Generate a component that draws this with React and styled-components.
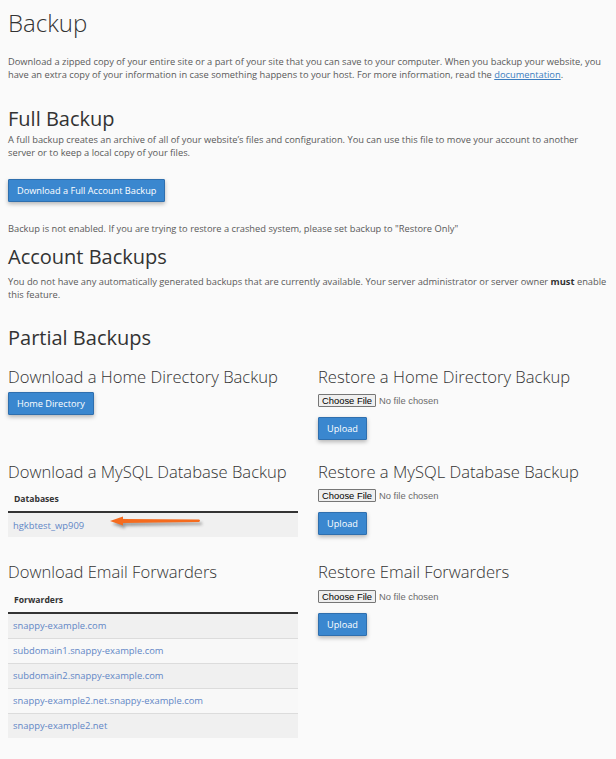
import React from "react";
import styled, { createGlobalStyle } from "styled-components";

const GlobalStyle = createGlobalStyle`
  html, body {
    margin: 0;
    padding: 0;
    background: #fafafa;
  }
  body {
    font-family: "Open Sans", "Liberation Sans", sans-serif;
    color: #595959;
  }
`;

const Page = styled.div`
  padding: 0 8px 20px;
`;

const PageTitle = styled.h1`
  margin: 10px 0 0;
  font-size: 24px;
  font-weight: 300;
  line-height: 1.1;
  color: #333;
`;

const Text = styled.p`
  margin: ${(p) => p.$mt || 0}px 0 0;
  max-width: ${(p) => p.$maxWidth || "none"};
  font-size: 9.3px;
  line-height: 12.8px;
  color: #595959;

  b {
    color: #333;
  }
`;

const DocLink = styled.a`
  color: #3b7dc0;
  text-decoration: underline;
`;

const SectionTitle = styled.h2`
  margin: ${(p) => p.$mt || 0}px 0 0;
  font-size: 20px;
  font-weight: 400;
  line-height: 1.1;
  color: #333;
`;

const Button = styled.button`
  display: block;
  margin-top: ${(p) => p.$mt || 0}px;
  height: 23px;
  padding: 0 8px;
  border: 1px solid #2f6fae;
  border-radius: 1px;
  background: #3a87cf;
  color: #fff;
  font-family: "Open Sans", "Liberation Sans", sans-serif;
  font-size: 9.2px;
  box-shadow: 0 2px 4px rgba(0, 0, 0, 0.28);
  cursor: pointer;
`;

const Columns = styled.div`
  display: grid;
  grid-template-columns: 290px 290px;
  column-gap: 20px;
  margin-top: ${(p) => p.$mt || 0}px;
`;

const Cell = styled.div`
  display: flex;
  flex-direction: column;
  align-items: flex-start;
`;

const ColTitle = styled.h3`
  margin: 0;
  font-size: 16.6px;
  font-weight: 300;
  line-height: 1.1;
  color: #333;
  white-space: nowrap;
`;

const FileInput = styled.input`
  margin-top: 8px;
  font-family: "Liberation Sans", Arial, sans-serif;
  font-size: 9.4px;
  color: #6b6b6b;
  height: 13px;
  line-height: 13px;

  &::file-selector-button {
    font-family: "Liberation Sans", Arial, sans-serif;
    font-size: 9.4px;
    height: 13px;
    padding: 0 3px;
    margin-right: 3px;
    border: 1px solid #767676;
    border-radius: 1px;
    background: #efefef;
    color: #000;
  }
`;

const Table = styled.div`
  position: relative;
  width: 290px;
  margin-top: 11px;
`;

const HeadCell = styled.div`
  padding: 0 6px 5px;
  font-size: 8.6px;
  font-weight: 700;
  line-height: 14px;
  color: #333;
  border-bottom: 2px solid #333;
`;

const Row = styled.div`
  height: 24px;
  display: flex;
  align-items: center;
  padding: 0 5px;
  background: ${(p) => (p.$odd ? "#f0f0f0" : "#f8f8f8")};
  border-top: ${(p) => (p.$first ? "none" : "1px solid #dcdcdc")};
  font-size: 9.4px;
  color: #6287c6;
`;

const Arrow = styled.svg`
  position: absolute;
  left: 93px;
  top: 22px;
  overflow: visible;
`;

function RestoreCell({ title }) {
  return (
    <Cell>
      <ColTitle>{title}</ColTitle>
      <FileInput type="file" />
      <Button $mt={10}>Upload</Button>
    </Cell>
  );
}

const forwarders = [
  "snappy-example.com",
  "subdomain1.snappy-example.com",
  "subdomain2.snappy-example.com",
  "snappy-example2.net.snappy-example.com",
  "snappy-example2.net",
];

export default function App() {
  return (
    <Page>
      <GlobalStyle />
      <PageTitle>Backup</PageTitle>
      <Text $mt={20}>
        Download a zipped copy of your entire site or a part of your site that
        you can save to your computer. When you backup your website, you have an
        extra copy of your information in case something happens to your host.
        For more information, read the <DocLink href="#">documentation</DocLink>.
      </Text>

      <SectionTitle $mt={26}>Full Backup</SectionTitle>
      <Text $mt={4} $maxWidth="590px">
        A full backup creates an archive of all of your website’s files and
        configuration. You can use this file to move your account to another
        server or to keep a local copy of your files.
      </Text>
      <Button $mt={19}>Download a Full Account Backup</Button>
      <Text $mt={21}>
        Backup is not enabled. If you are trying to restore a crashed system,
        please set backup to "Restore Only"
      </Text>

      <SectionTitle $mt={11}>Account Backups</SectionTitle>
      <Text $mt={8}>
        You do not have any automatically generated backups that are currently
        available. Your server administrator or server owner <b>must</b> enable
        this feature.
      </Text>

      <SectionTitle $mt={25}>Partial Backups</SectionTitle>

      <Columns $mt={19}>
        <Cell>
          <ColTitle>Download a Home Directory Backup</ColTitle>
          <Button $mt={6}>Home Directory</Button>
        </Cell>
        <RestoreCell title="Restore a Home Directory Backup" />
      </Columns>

      <Columns $mt={23}>
        <Cell>
          <ColTitle>Download a MySQL Database Backup</ColTitle>
          <Table>
            <HeadCell>Databases</HeadCell>
            <Row $odd $first>hgkbtest_wp909</Row>
            <Arrow width="100" height="20" viewBox="0 0 100 20">
              <defs>
                <filter id="shadow" x="-10%" y="-50%" width="120%" height="250%">
                  <feGaussianBlur stdDeviation="1.6" />
                </filter>
              </defs>
              <g filter="url(#shadow)" opacity="0.45" transform="translate(2 3)">
                <path d="M9 7 L22 2.5 L22 5 L99 5.5 L99 7.8 L22 9 L22 11.5 Z" fill="#333" />
              </g>
              <path d="M9 7 L22 2.5 L22 5 L98 5.6 Q100 6.8 98 8 L22 9 L22 11.5 Z" fill="#f56b1e" />
            </Arrow>
          </Table>
        </Cell>
        <RestoreCell title="Restore a MySQL Database Backup" />
      </Columns>

      <Columns $mt={26}>
        <Cell>
          <ColTitle>Download Email Forwarders</ColTitle>
          <Table>
            <HeadCell>Forwarders</HeadCell>
            {forwarders.map((f, i) => (
              <Row key={f} $odd={i % 2 === 0} $first={i === 0}>
                {f}
              </Row>
            ))}
          </Table>
        </Cell>
        <RestoreCell title="Restore Email Forwarders" />
      </Columns>
    </Page>
  );
}
